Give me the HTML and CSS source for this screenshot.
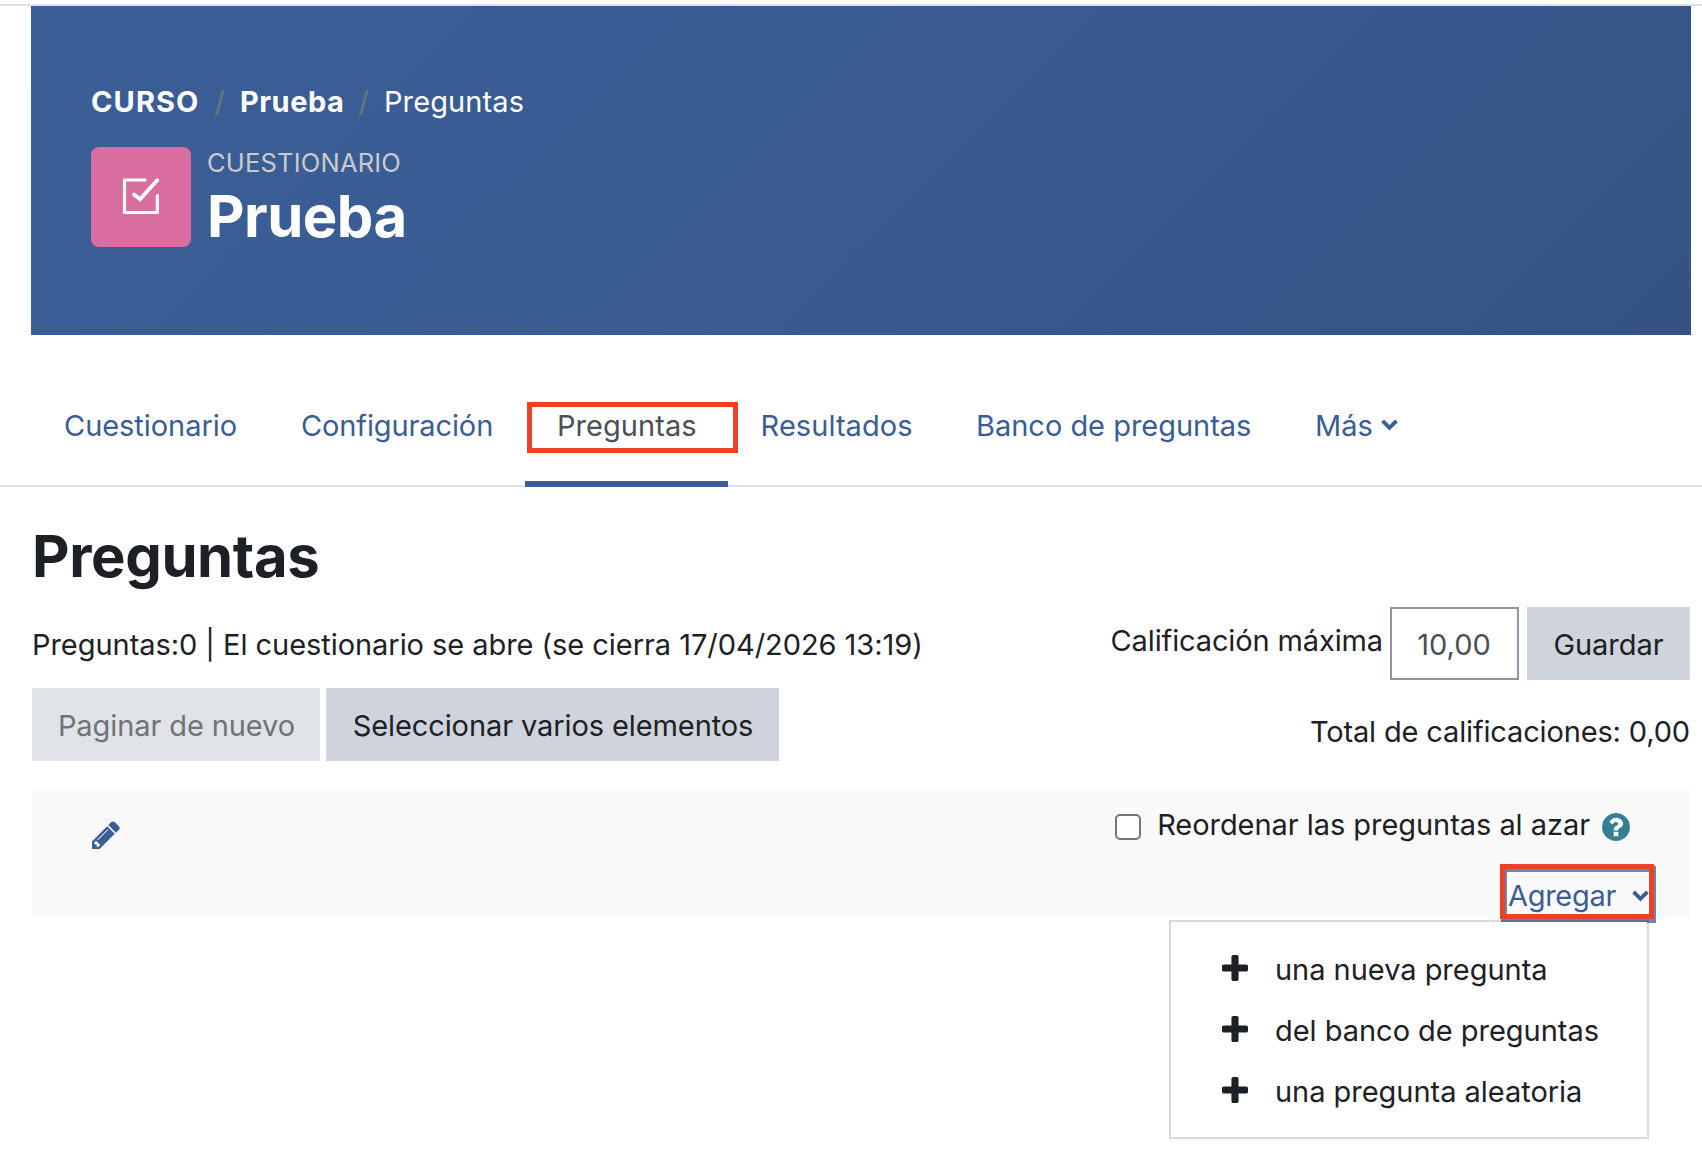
FILE: index.html
```html
<!DOCTYPE html>
<html lang="es">
<head>
<meta charset="utf-8">
<title>Prueba: Preguntas</title>
<link rel="stylesheet" href="styles.css">
</head>
<body>
<svg class="defs" width="0" height="0" aria-hidden="true">
  <symbol id="plus" viewBox="192 128 1408 1408"><path d="M1600 736v192q0 40-28 68t-68 28h-416v416q0 40-28 68t-68 28h-192q-40 0-68-28t-28-68v-416h-416q-40 0-68-28t-28-68v-192q0-40 28-68t68-28h416v-416q0-40 28-68t68-28h192q40 0 68 28t28 68v416h416q40 0 68 28t28 68z"/></symbol>
  <symbol id="chevron" viewBox="0 0 16 11"><path d="M1.5 1.700 8 8.200l6.500-6.500" fill="none" stroke="currentColor" stroke-width="3.600"/></symbol>
</svg>
<div class="topline"></div>
<header class="banner">
  <nav class="crumbs">
    <a class="crumb-course">CURSO</a><span class="sep">/</span><a class="crumb-quiz">Prueba</a><span class="sep">/</span><span class="crumb-page">Preguntas</span>
  </nav>
  <div class="activity">
    <svg class="activity-icon" viewBox="0 0 100 100" fill="none" stroke="#fff" stroke-linecap="round">
      <path d="M54 33H33.500V65.500H66.300V48.500" stroke-width="3.200" stroke-linejoin="round"/>
      <path d="M43 47.500 49 52.200 66.200 33.200" stroke-width="3.900"/>
    </svg>
    <div>
      <div class="kind">CUESTIONARIO</div>
      <h1 class="name">Prueba</h1>
    </div>
  </div>
</header>
<nav class="tabs">
  <a class="tab tab-quiz">Cuestionario</a>
  <a class="tab tab-config">Configuración</a>
  <a class="tab tab-questions active">Preguntas<span class="mark mark-tab"></span></a>
  <a class="tab tab-results">Resultados</a>
  <a class="tab tab-bank">Banco de preguntas</a>
  <a class="tab tab-more">Más<svg class="chevron"><use href="#chevron"/></svg></a>
</nav>
<main>
  <h2 class="title">Preguntas</h2>
  <div class="controls">
    <div class="left">
      <p class="status">Preguntas:0 | El cuestionario se abre (se cierra 17/04/2026 13:19)</p>
      <div class="buttons">
        <button class="btn repaginate" disabled>Paginar de nuevo</button>
        <button class="btn select-multiple">Seleccionar varios elementos</button>
      </div>
    </div>
    <div class="right">
      <div class="grade">
        <label class="grade-label" for="max">Calificación máxima</label>
        <input class="grade-input" id="max" value="10,00">
        <button class="btn save">Guardar</button>
      </div>
      <p class="total">Total de calificaciones: 0,00</p>
    </div>
  </div>
  <section class="section">
    <svg class="pencil" viewBox="128 128 1536 1536"><path d="M491 1536l91-91-235-235-91 91v107h128v128h107zm523-928q0-22-22-22-10 0-17 7l-542 542q-7 7-7 17 0 22 22 22 10 0 17-7l542-542q7-7 7-17zm-54-192l416 416-832 832h-416v-416zm683 96q0 53-37 90l-166 166-416-416 166-165q36-38 90-38 53 0 91 38l235 234q37 39 37 91z"/></svg>
    <div class="section-right">
      <div class="shuffle">
        <span class="checkbox"></span>
        <span class="shuffle-label">Reordenar las preguntas al azar</span>
        <svg class="help" viewBox="128 128 1536 1536"><path d="M1024 1376v-192q0-14-9-23t-23-9h-192q-14 0-23 9t-9 23v192q0 14 9 23t23 9h192q14 0 23-9t9-23zm256-672q0-88-55.500-163t-138.500-116-170-41q-243 0-371 213-15 24 8 42l132 100q7 6 19 6 16 0 25-12 53-68 86-92 34-24 86-24 48 0 85.500 26t37.500 59q0 38-20 61t-68 45q-63 28-115.500 86.500t-52.500 125.500v36q0 14 9 23t23 9h192q14 0 23-9t9-23q0-19 21.500-49.500t54.500-49.500q32-18 49-28.500t46-35 44.500-48 28-60.500 12.500-81zm384 192q0 209-103 385.500t-279.500 279.500-385.500 103-385.500-103-279.500-279.500-103-385.500 103-385.500 279.500-279.500 385.500-103 385.500 103 279.500 279.500 103 385.500z"/></svg>
      </div>
      <div class="add">
        <a class="add-toggle">Agregar<svg class="chevron"><use href="#chevron"/></svg></a>
        <div class="menu">
          <a class="item"><svg class="plus"><use href="#plus"/></svg>una nueva pregunta</a>
          <a class="item"><svg class="plus"><use href="#plus"/></svg>del banco de preguntas</a>
          <a class="item"><svg class="plus"><use href="#plus"/></svg>una pregunta aleatoria</a>
        </div>
        <span class="mark mark-add"></span>
      </div>
    </div>
  </section>
</main>
</body>
</html>
```
FILE: styles.css
```css
* { box-sizing: border-box; }
body { margin: 0; min-height: 1164px; background: #fff; color: #1d2125; font: 400 29px/44px Inter, sans-serif; }
h1, h2, p { margin: 0; }
a { color: inherit; text-decoration: none; white-space: nowrap; }
svg { display: block; flex: none; }
.defs { position: absolute; }
.topline { height: 6px; border-bottom: 2px solid #dee2e6; }

.banner { height: 329px; margin: 0 11px 0 31px; padding: 74px 60px 0; color: #fff; background: linear-gradient(135deg, #3a5e96 0%, #395b92 50%, #345384 100%); }
.crumbs { display: flex; height: 44px; }
.crumb-course, .crumb-quiz { font-weight: 700; }
.crumb-course { width: 110px; letter-spacing: 1.1px; }
.crumb-quiz { width: 105px; letter-spacing: .5px; }
.crumb-page { letter-spacing: .1px; }
.sep { width: 39px; padding-right: 2px; text-align: center; font-weight: 500; color: #6a737b; }
.activity { display: flex; gap: 16px; margin-top: 23px; }
.activity-icon { width: 100px; height: 100px; border-radius: 8px; background: #da6d9f; }
.kind { font-size: 25.5px; line-height: 32px; letter-spacing: .2px; color: #c9cbcd; }
.name { margin-top: 7px; font-size: 58px; line-height: 60px; font-weight: 700; letter-spacing: -.5px; }

.tabs { display: flex; height: 152px; padding: 48px 0 0 32px; border-bottom: 2px solid #dee2e6; color: #3a5d96; }
.tab { position: relative; height: 104px; padding: 21px 0 0 32px; }
.tab-quiz { width: 237px; letter-spacing: -.05px; }
.tab-config { width: 256px; letter-spacing: -.12px; }
.tab-questions { width: 203px; letter-spacing: .05px; }
.tab-results { width: 216px; padding-left: 32.600px; letter-spacing: .05px; }
.tab-bank { width: 339px; letter-spacing: -.02px; }
.tab-more { display: flex; }
.tab-more .chevron { margin: 15px 0 0 8px; }
.active { color: #495057; border-bottom: 6px solid #3a5d96; }
.chevron { width: 17px; height: 12px; }
.mark { position: absolute; border: 5px solid #ec4127; }
.mark-tab { left: 2.400px; top: 19px; width: 211px; height: 51px; }

main { margin: 0 12px 0 32px; }
.title { padding-top: 34px; font-size: 58px; line-height: 70px; font-weight: 700; letter-spacing: -.4px; }
.controls { display: flex; justify-content: space-between; height: 199px; padding-top: 16px; }
.left { padding-top: 16px; }
.status { letter-spacing: -.05px; white-space: nowrap; }
.buttons { display: flex; gap: 6px; margin-top: 21px; }
.btn { height: 73px; padding: 2px 0 0; border: 0; background: #cfd3db; color: #1d2125; font: inherit; white-space: nowrap; }
.repaginate { width: 288px; padding-left: 1px; background: #e0e3e8; color: #717477; letter-spacing: -.1px; }
.select-multiple { width: 453px; padding-left: 1px; letter-spacing: -.1px; }
.grade { display: flex; }
.grade-label { padding-top: 12px; margin-right: 7px; letter-spacing: -.13px; white-space: nowrap; }
.grade-input { width: 129px; height: 73px; padding: 2px 1px 0 0; border: 2px solid #8f959e; color: #495057; font: inherit; text-align: center; outline: 0; }
.save { width: 163px; margin-left: 8px; letter-spacing: -.05px; }
.total { margin-top: 30px; text-align: right; letter-spacing: -.15px; }

.section { display: flex; justify-content: space-between; height: 129px; padding: 12px 34px 0 60px; background: #fafafa; }
.pencil { width: 28px; height: 28px; margin: 18.500px 0 0 -.5px; fill: #3a5d96; }
.shuffle { display: flex; align-items: center; height: 51px; padding-right: 26px; margin-top: -1px; }
.checkbox { width: 26px; height: 26px; margin-right: 16px; border: 2px solid #767676; border-radius: 5px; background: #fff; }
.shuffle-label { margin: -4px 12px 0 0; letter-spacing: -.05px; }
.help { width: 28px; height: 28px; fill: #357f92; }
.add { position: relative; width: 155px; margin: 14px 0 0 auto; color: #3a5d96; }
.add-toggle { display: flex; height: 57px; padding: 2px 0 0 1px; border: 6px solid #6c86b3; letter-spacing: -.3px; }
.add-toggle .chevron { margin: 16px 0 0 16px; }
.menu { position: absolute; top: 54px; right: 7px; z-index: 1; width: 480px; height: 219px; padding: 18px 0 0 51px; border: 2px solid rgba(0, 0, 0, .15); background: #fff; background-clip: padding-box; color: #1d2125; }
.item { display: flex; height: 61px; padding-top: 8px; letter-spacing: -.03px; }
.plus { width: 26px; height: 26px; margin: 6.500px 27px 0 0; fill: #1d2125; }
.mark-add { z-index: 2; left: -1px; top: -2px; width: 154px; height: 55px; }
```
